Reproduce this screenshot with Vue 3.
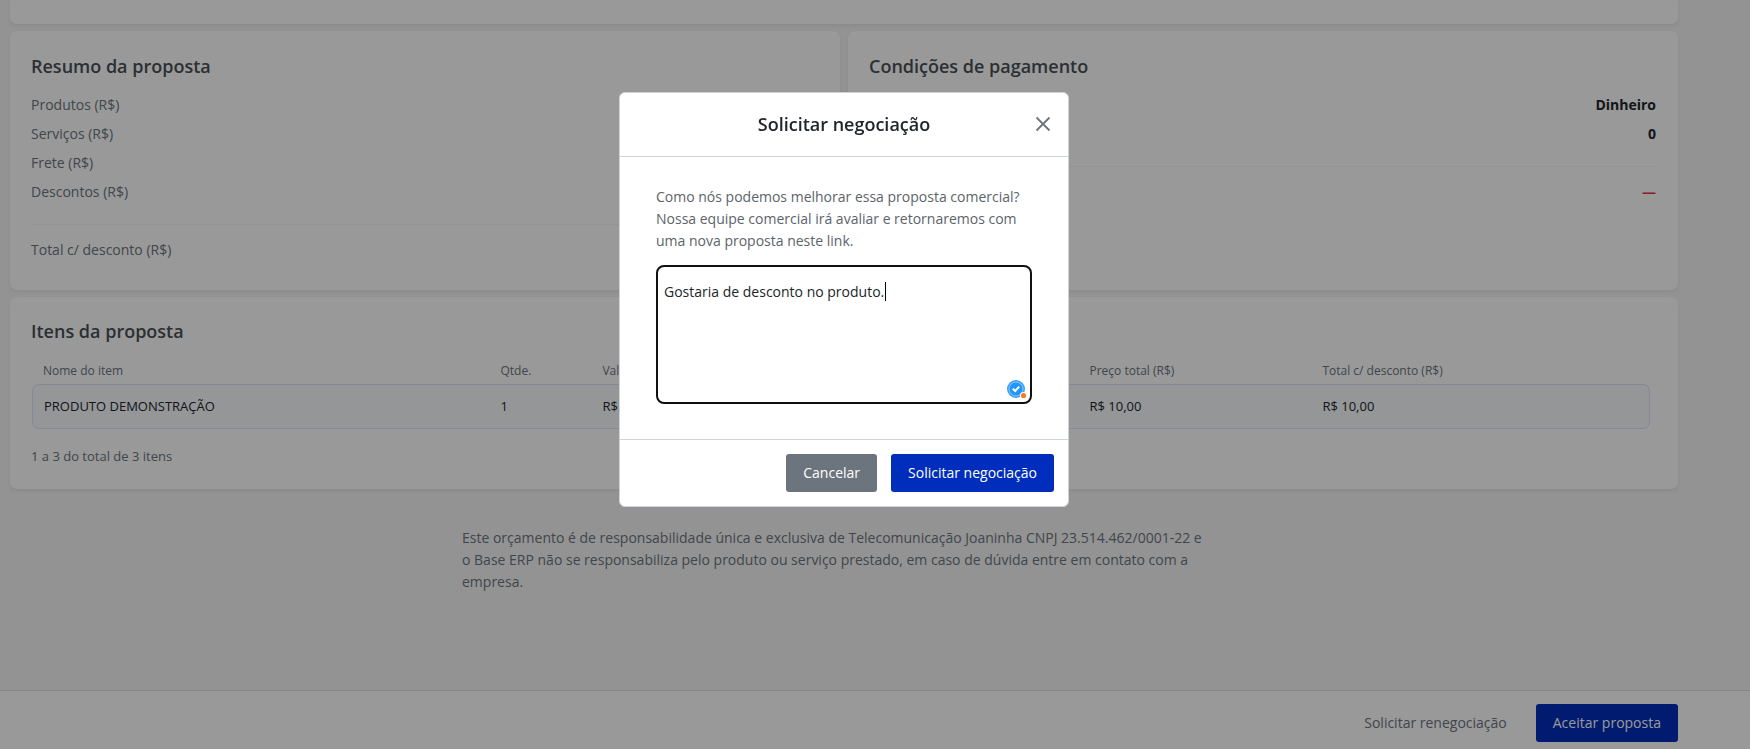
<script setup>
import { ref, computed, nextTick, onMounted } from 'vue'

const message = ref('Gostaria de desconto no produto.')
const field = ref(null)
const textWidth = ref(0)
const caretLeft = computed(() => `${Math.round(textWidth.value) + 9}px`)

function measure() {
  const ctx = document.createElement('canvas').getContext('2d')
  ctx.font = getComputedStyle(field.value).font
  textWidth.value = ctx.measureText(message.value).width
}

onMounted(async () => {
  await nextTick()
  measure()
})

const summary = ['Produtos (R$)', 'Serviços (R$)', 'Frete (R$)', 'Descontos (R$)']
const items = [
  { name: 'PRODUTO DEMONSTRAÇÃO', qty: 1, unit: 'R$ 10,00', total: 'R$ 10,00', net: 'R$ 10,00' },
]
</script>

<template>
  <div class="page">
    <main class="content">
      <section class="card card-top"></section>

      <div class="columns">
        <section class="card">
          <h2>Resumo da proposta</h2>
          <p v-for="label in summary" :key="label" class="line">{{ label }}</p>
          <hr />
          <p class="line">Total c/ desconto (R$)</p>
        </section>
        <section class="card">
          <h2>Condições de pagamento</h2>
          <p class="line value">Dinheiro</p>
          <p class="line value">0</p>
          <hr />
          <p class="line value negative">—</p>
        </section>
      </div>

      <section class="card">
        <h2 class="items-title">Itens da proposta</h2>
        <table>
          <colgroup>
            <col class="col-name" />
            <col class="col-qty" />
            <col class="col-unit" />
            <col class="col-total" />
            <col />
          </colgroup>
          <thead>
            <tr>
              <th>Nome do item</th>
              <th>Qtde.</th>
              <th>Valor unitário (R$)</th>
              <th>Preço total (R$)</th>
              <th>Total c/ desconto (R$)</th>
            </tr>
          </thead>
          <tbody>
            <tr v-for="item in items" :key="item.name">
              <td>{{ item.name }}</td>
              <td>{{ item.qty }}</td>
              <td>{{ item.unit }}</td>
              <td>{{ item.total }}</td>
              <td>{{ item.net }}</td>
            </tr>
          </tbody>
        </table>
        <p class="count">1 a 3 do total de 3 itens</p>
      </section>

      <p class="legal">
        Este orçamento é de responsabilidade única e exclusiva de Telecomunicação Joaninha CNPJ
        23.514.462/0001-22 e o Base ERP não se responsabiliza pelo produto ou serviço prestado, em
        caso de dúvida entre em contato com a empresa.
      </p>
    </main>

    <footer class="actions">
      <button type="button" class="btn btn-link">Solicitar renegociação</button>
      <button type="button" class="btn btn-primary">Aceitar proposta</button>
    </footer>

    <div class="backdrop">
      <div class="dialog" role="dialog" aria-modal="true" aria-labelledby="dialog-title">
        <header class="dialog-head">
          <h3 id="dialog-title">Solicitar negociação</h3>
          <button type="button" class="close" aria-label="Fechar">
            <svg width="16" height="16" viewBox="0 0 16 16" fill="none">
              <path d="M1.5 1.5L14.5 14.5M14.5 1.5L1.5 14.5" stroke="#6c757d" stroke-width="1.8" />
            </svg>
          </button>
        </header>
        <div class="dialog-body">
          <label for="message">
            Como nós podemos melhorar essa proposta comercial? Nossa equipe comercial irá avaliar e
            retornaremos com uma nova proposta neste link.
          </label>
          <div class="field">
            <textarea id="message" ref="field" v-model="message" spellcheck="false" @input="measure"></textarea>
            <span class="caret" :style="{ left: caretLeft }"></span>
            <svg class="checker" width="20" height="20" viewBox="0 0 20 20">
              <circle cx="9" cy="9" r="9" fill="#3f9ff5" />
              <circle cx="9" cy="9" r="7" fill="#2196fb" stroke="#8cc8fc" stroke-width="1" />
              <path d="M5.8 8.8L8.2 11L12.2 6.6" fill="none" stroke="#fff" stroke-width="2" />
              <circle cx="16.5" cy="15.5" r="3.5" fill="#fff" />
              <circle cx="16.5" cy="15.5" r="2.6" fill="#f57c20" />
            </svg>
          </div>
        </div>
        <div class="dialog-foot">
          <button type="button" class="btn btn-secondary">Cancelar</button>
          <button type="button" class="btn btn-primary">Solicitar negociação</button>
        </div>
      </div>
    </div>
  </div>
</template>

<style>
body {
  margin: 0;
  background: #f5f5f5;
}
</style>

<style scoped>
* {
  box-sizing: border-box;
}
.page {
  display: flex;
  flex-direction: column;
  min-height: 100vh;
  background: #f5f5f5;
  color: #6c757d;
  font-family: "Open Sans", "Noto Sans", sans-serif;
  font-size: 14px;
  line-height: 21px;
}
.content {
  display: flex;
  flex-direction: column;
  gap: 7px;
  flex: 1;
  padding: 0 72px 0 10px;
}
.card {
  background: #fff;
  border-radius: 7px;
  box-shadow: 0 2px 4px rgba(0, 0, 0, 0.06);
  padding: 22px 22px 22px 21px;
}
.card-top {
  height: 24px;
  padding: 0;
  border-radius: 0 0 7px 7px;
}
.columns {
  display: grid;
  grid-template-columns: 1fr 1fr;
  gap: 8px;
}
.columns .card {
  min-height: 259px;
}
h2 {
  margin: 0 0 15px;
  color: #495057;
  font-size: 18px;
  font-weight: 600;
  line-height: 26px;
}
.items-title {
  margin-bottom: 15px;
  line-height: 24px;
}
.line {
  margin: 0 0 8px;
}
.value {
  color: #212529;
  font-weight: 700;
  text-align: right;
}
.negative {
  color: #dc3545;
}
hr {
  margin: 22px 0 14px;
  border: 0;
  border-top: 1px solid #f5f5f5;
}
table {
  width: calc(100% - 7px);
  margin-left: 1px;
  table-layout: fixed;
  border-collapse: separate;
  border-spacing: 0;
  text-align: left;
}
.col-name {
  width: 28.4%;
}
.col-qty {
  width: 6.3%;
}
.col-unit {
  width: 30.1%;
}
.col-total {
  width: 14.4%;
}
th {
  padding: 0 9px;
  font-size: 12px;
  font-weight: 400;
  line-height: 26px;
}
th:first-child,
td:first-child {
  padding-left: 11px;
}
td {
  height: 45px;
  padding: 0 9px;
  background: #f7fafd;
  border: 1px solid #e1e3fb;
  border-width: 1px 0;
  color: #212529;
  font-size: 13px;
}
td:first-child {
  border-left-width: 1px;
  border-radius: 7px 0 0 7px;
}
td:last-child {
  border-right-width: 1px;
  border-radius: 0 7px 7px 0;
}
.count {
  margin: 17px 0 0;
  font-size: 13px;
}
.legal {
  width: 764px;
  max-width: 100%;
  margin: 31px auto;
  padding-right: 16px;
  line-height: 22px;
}
.actions {
  display: flex;
  justify-content: flex-end;
  align-items: center;
  gap: 12px;
  padding: 13px 72px 7px 10px;
  background: #fff;
  border-top: 1px solid #dee2e6;
}
.btn {
  height: 38px;
  padding: 0 17px 2px;
  border: 0;
  border-radius: 3px;
  color: #fff;
  font: inherit;
  font-weight: 500;
}
.btn-primary {
  background: #002dbb;
}
.btn-secondary {
  background: #6c757d;
}
.btn-link {
  background: transparent;
  color: #6c757d;
  font-weight: 400;
}
.backdrop {
  position: fixed;
  inset: 0;
  display: flex;
  justify-content: center;
  align-items: flex-start;
  padding: 92px 62px 0 0;
  background: rgba(0, 0, 0, 0.4);
}
.dialog {
  width: 450px;
  background: #fff;
  border: 1px solid #ced4da;
  border-radius: 6px;
}
.dialog-head {
  position: relative;
  padding: 18px 48px 19px;
  border-bottom: 1px solid #ced4da;
}
h3 {
  margin: 0;
  color: #212529;
  font-size: 18px;
  font-weight: 600;
  line-height: 26px;
  text-align: center;
}
.close {
  position: absolute;
  top: 19px;
  right: 13px;
  display: flex;
  align-items: center;
  justify-content: center;
  width: 24px;
  height: 24px;
  padding: 0;
  background: none;
  border: 0;
}
.dialog-body {
  padding: 29px 36px 35px;
}
label {
  display: block;
  color: #5c636a;
  line-height: 22px;
}
.field {
  position: relative;
  margin-top: 13px;
}
textarea {
  display: block;
  width: 100%;
  height: 139px;
  padding: 14px 6px;
  background: #fff;
  border: 2px solid #101010;
  border-radius: 8px;
  outline: 0;
  color: #212529;
  caret-color: transparent;
  font: inherit;
  resize: none;
}
.caret {
  position: absolute;
  top: 17px;
  width: 1px;
  height: 19px;
  background: #000;
}
.checker {
  position: absolute;
  right: 5px;
  bottom: 4px;
}
.dialog-foot {
  display: flex;
  justify-content: flex-end;
  gap: 14px;
  padding: 14px;
  border-top: 1px solid #ced4da;
}
</style>
